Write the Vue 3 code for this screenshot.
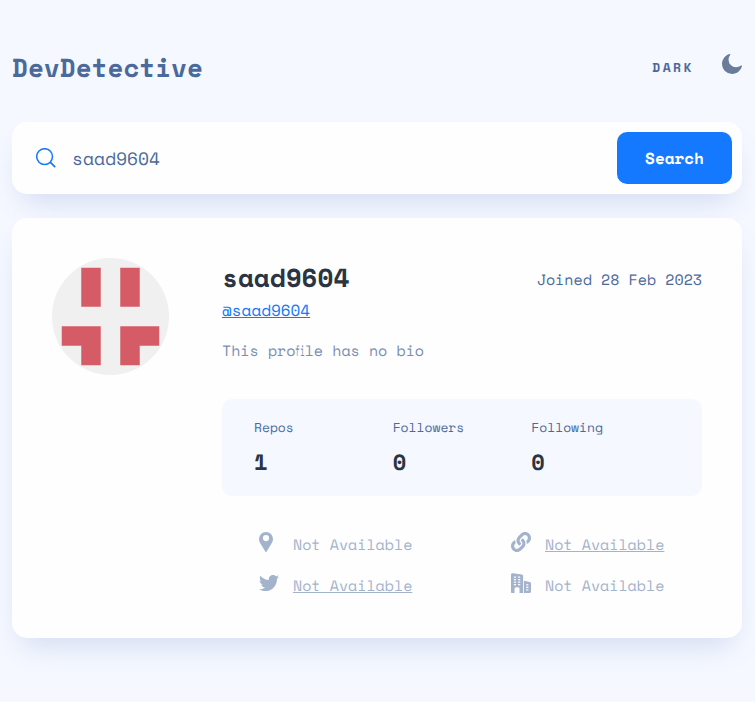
<script setup>
import { ref } from 'vue'

const query = ref('saad9604')

const stats = [
  { label: 'Repos', value: 1 },
  { label: 'Followers', value: 0 },
  { label: 'Following', value: 0 },
]
</script>

<template>
  <main class="page">
    <header class="header">
      <h1 class="brand">DevDetective</h1>
      <button class="mode" type="button">
        <span class="mode-label">DARK</span>
        <svg width="20" height="20" viewBox="0 0 20 20"><path fill="#697c9a" d="M19.513 11.397a.701.701 0 00-.588.128 7.496 7.496 0 01-2.276 1.336 7.101 7.101 0 01-2.583.462 7.505 7.505 0 01-5.32-2.209 7.568 7.568 0 01-2.199-5.342c0-.873.154-1.72.41-2.49a6.904 6.904 0 011.227-2.21.657.657 0 00-.102-.924.701.701 0 00-.589-.128C5.32.61 3.427 1.92 2.072 3.666A10.158 10.158 0 000 9.83c0 2.8 1.125 5.342 2.967 7.19a10.025 10.025 0 007.16 2.98c2.353 0 4.527-.822 6.266-2.183a10.13 10.13 0 003.58-5.624.623.623 0 00-.46-.796z" /></svg>
      </button>
    </header>

    <form class="search" @submit.prevent>
      <svg class="search-icon" width="20" height="20" viewBox="0 0 20 20" fill="none" stroke="#1479ff" stroke-width="1.5">
        <circle cx="8.6" cy="8.6" r="7.9" />
        <path d="M14.2 14.2L19.2 19.2" stroke-width="1.8" />
      </svg>
      <input v-model="query" class="search-input" type="text" />
      <button class="search-button" type="submit">Search</button>
    </form>

    <section class="card">
      <svg class="avatar" width="117" height="117" viewBox="0 0 420 420">
        <rect width="420" height="420" fill="#f0f0f0" />
        <path fill="#d55c67" d="M105 35h70v140h-70zM245 35h70v140h-70zM35 245h140v140h-70v-70H35zM245 245h140v70h-70v70h-70z" />
      </svg>

      <div class="profile">
        <div class="identity">
          <div>
            <h2 class="name">saad9604</h2>
            <a class="handle">@saad9604</a>
          </div>
          <p class="joined">Joined 28 Feb 2023</p>
        </div>
        <p class="bio">This pro<span class="ligature">fi</span>le has no bio</p>

        <div class="stats">
          <div v-for="s in stats" :key="s.label">
            <p class="stat-label">{{ s.label }}</p>
            <p class="stat-value">{{ s.value }}</p>
          </div>
        </div>

        <div class="details">
          <div class="detail">
            <svg width="20" height="20" viewBox="0 0 20 20"><path fill-rule="evenodd" d="M7 0a7 7 0 00-7 7c0 1.7.5 2.9 1.3 4.3L6.5 19.7a.6.6 0 001 0l5.2-8.4C13.5 9.9 14 8.7 14 7a7 7 0 00-7-7zm0 9.2a3.1 3.1 0 110-6.2 3.1 3.1 0 010 6.2z" /></svg>
            <span>Not Available</span>
          </div>
          <div class="detail">
            <svg width="20" height="20" viewBox="0 0 512 512"><path d="M326.612 185.391c59.747 59.809 58.927 155.698.36 214.59-.11.12-.24.25-.36.37l-67.2 67.2c-59.27 59.27-155.699 59.262-214.96 0-59.27-59.26-59.27-155.7 0-214.96l37.106-37.106c9.84-9.84 26.786-3.3 27.294 10.606.648 17.722 3.826 35.527 9.69 52.721 1.986 5.822.567 12.262-3.783 16.612l-13.087 13.087c-28.026 28.026-28.905 73.66-1.155 101.96 28.024 28.579 74.086 28.749 102.325.51l67.2-67.19c28.191-28.191 28.073-73.757 0-101.83-3.701-3.694-7.429-6.564-10.341-8.569a16.037 16.037 0 0 1-6.947-12.606c-.396-10.567 3.348-21.456 11.698-29.806l21.054-21.055c5.521-5.521 14.182-6.199 20.584-1.731a152.482 152.482 0 0 1 20.522 17.197zM467.547 44.449c-59.261-59.262-155.69-59.27-214.96 0l-67.2 67.2c-.12.12-.25.25-.36.37-58.566 58.892-59.387 154.781.36 214.59a152.454 152.454 0 0 0 20.521 17.196c6.402 4.468 15.064 3.789 20.584-1.731l21.054-21.055c8.35-8.35 12.094-19.239 11.698-29.806a16.037 16.037 0 0 0-6.947-12.606c-2.912-2.005-6.64-4.875-10.341-8.569-28.073-28.073-28.191-73.639 0-101.83l67.2-67.19c28.239-28.239 74.3-28.069 102.325.51 27.75 28.3 26.872 73.934-1.155 101.96l-13.087 13.087c-4.35 4.35-5.769 10.79-3.783 16.612 5.864 17.194 9.042 34.999 9.69 52.721.509 13.906 17.454 20.446 27.294 10.606l37.106-37.106c59.271-59.259 59.271-155.699.001-214.959z" /></svg>
            <a class="link">Not Available</a>
          </div>
          <div class="detail">
            <svg width="20" height="20" viewBox="0 0 512 512"><path d="M459.37 151.716c.325 4.548.325 9.097.325 13.645 0 138.72-105.583 298.558-298.558 298.558-59.452 0-114.68-17.219-161.137-47.106 8.447.974 16.568 1.299 25.34 1.299 49.055 0 94.213-16.568 130.274-44.832-46.132-.975-84.792-31.188-98.112-72.772 6.498.974 12.995 1.624 19.818 1.624 9.421 0 18.843-1.3 27.614-3.573-48.081-9.747-84.143-51.98-84.143-102.985v-1.299c13.969 7.797 30.214 12.67 47.431 13.319-28.264-18.843-46.781-51.005-46.781-87.391 0-19.492 5.197-37.36 14.294-52.954 51.655 63.675 129.3 105.258 216.365 109.807-1.624-7.797-2.599-15.918-2.599-24.04 0-57.828 46.782-104.934 104.934-104.934 30.213 0 57.502 12.67 76.67 33.137 23.715-4.548 46.456-13.32 66.599-25.34-7.798 24.366-24.366 44.833-46.132 57.827 21.117-2.273 41.584-8.122 60.426-16.243-14.292 20.791-32.161 39.308-52.628 54.253z" /></svg>
            <a class="link">Not Available</a>
          </div>
          <div class="detail">
            <svg width="20" height="20" viewBox="0 0 20 20"><path fill-rule="evenodd" d="M10.858 1.558L1.7.167A1.477 1.477 0 00.517.492 1.49 1.49 0 000 1.608v17.559c0 .458.375.833.833.833h2.709v-4.375c0-.808.65-1.458 1.458-1.458h2.083c.808 0 1.459.65 1.459 1.458V20h3.541V2.792c0-.617-.525-1.133-1.225-1.234zM4.583 12.292h-1.25a.625.625 0 010-1.25h1.25a.625.625 0 010 1.25zm0-2.5h-1.25a.625.625 0 010-1.25h1.25a.625.625 0 010 1.25zm0-2.5h-1.25a.625.625 0 010-1.25h1.25a.625.625 0 010 1.25zm0-2.5h-1.25a.625.625 0 010-1.25h1.25a.625.625 0 010 1.25zm4.167 7.5H7.5a.625.625 0 010-1.25h1.25a.625.625 0 010 1.25zm0-2.5H7.5a.625.625 0 010-1.25h1.25a.625.625 0 010 1.25zm0-2.5H7.5a.625.625 0 010-1.25h1.25a.625.625 0 010 1.25zm0-2.5H7.5a.625.625 0 010-1.25h1.25a.625.625 0 010 1.25zM18.85 9.035l-5.933-1.242V20h5.208A1.877 1.877 0 0020 18.125v-7.667c0-.695-.479-1.276-1.15-1.423zM16.875 17.5h-1.25a.625.625 0 010-1.25h1.25a.625.625 0 010 1.25zm0-2.5h-1.25a.625.625 0 010-1.25h1.25a.625.625 0 010 1.25zm0-2.5h-1.25a.625.625 0 010-1.25h1.25a.625.625 0 010 1.25z" /></svg>
            <span>Not Available</span>
          </div>
        </div>
      </div>
    </section>
  </main>
</template>

<style>
body {
  margin: 0;
  background: #f5f8ff;
}
</style>

<style scoped>
.page {
  box-sizing: border-box;
  min-height: 702px;
  padding: 48px 13px 64px 12px;
  background: #f5f8ff;
  color: #4b6a9b;
  font-family: "Space Mono", "DejaVu Sans Mono", monospace;
  text-rendering: geometricPrecision;
}
h1, h2, p {
  margin: 0;
}
svg {
  display: block;
  flex: none;
}
button, input {
  padding: 0;
  border: 0;
  background: none;
  color: inherit;
  font-family: inherit;
  text-rendering: inherit;
}
.header {
  display: flex;
  justify-content: space-between;
  align-items: flex-start;
  height: 74px;
}
.brand {
  font-size: 26px;
  line-height: 40px;
}
.mode {
  display: flex;
  gap: 28px;
  padding-top: 6px;
}
.mode-label {
  font-size: 13px;
  font-weight: 700;
  line-height: 27px;
  letter-spacing: 2.5px;
}
.search {
  display: flex;
  align-items: center;
  box-sizing: border-box;
  height: 72px;
  margin-bottom: 24px;
  padding: 0 10px 0 24px;
  border-radius: 15px;
  background: #fefefe;
  box-shadow: 0 16px 30px -10px rgba(70, 96, 187, 0.2);
}
.search-icon {
  margin-right: 16px;
}
.search-input {
  flex: 1;
  min-width: 0;
  height: 54px;
  padding-top: 2px;
  box-sizing: border-box;
  outline: none;
  font-size: 18px;
}
.search-button {
  width: 115px;
  height: 52px;
  border-radius: 10px;
  background: #1479ff;
  color: #fff;
  font-size: 16px;
  font-weight: 700;
}
.card {
  display: flex;
  gap: 53px;
  box-sizing: border-box;
  height: 420px;
  padding: 40px;
  border-radius: 15px;
  background: #fefefe;
  box-shadow: 0 16px 30px -10px rgba(70, 96, 187, 0.2);
}
.avatar {
  border-radius: 50%;
}
.profile {
  flex: 1;
  min-width: 0;
}
.identity {
  display: flex;
  justify-content: space-between;
}
.name {
  color: #2b3442;
  font-size: 26px;
  line-height: 40px;
}
.handle {
  display: block;
  width: max-content;
  color: #1479ff;
  font-size: 16px;
  line-height: 24px;
  text-decoration: underline;
}
.joined {
  padding-top: 10px;
  font-size: 15px;
  line-height: 24px;
}
.bio {
  margin-top: 17px;
  height: 24px;
  font-size: 15px;
  line-height: 24px;
  opacity: 0.75;
}
/* Sets the "fi" pair in a single monospace cell. */
.ligature {
  display: inline-block;
  margin-right: -0.612em;
  transform: scaleX(0.54);
  transform-origin: left;
}
.stats {
  display: grid;
  grid-template-columns: repeat(3, 1fr);
  box-sizing: border-box;
  height: 97px;
  margin-top: 36px;
  padding: 18px 32px;
  border-radius: 10px;
  background: #f5f8ff;
}
.stat-label {
  font-size: 13px;
  line-height: 20px;
}
.stat-value {
  margin-top: 9px;
  color: #2b3442;
  font-size: 22px;
  font-weight: 700;
  line-height: 32px;
}
.details {
  display: grid;
  grid-template-columns: 252px auto;
  row-gap: 17px;
  margin-top: 36px;
  padding-left: 37px;
}
.detail {
  display: flex;
  gap: 14px;
  height: 24px;
  font-size: 15px;
  line-height: 26px;
  opacity: 0.5;
}
.detail svg {
  fill: #4b6a9b;
}
.link {
  text-decoration: underline;
}
</style>
